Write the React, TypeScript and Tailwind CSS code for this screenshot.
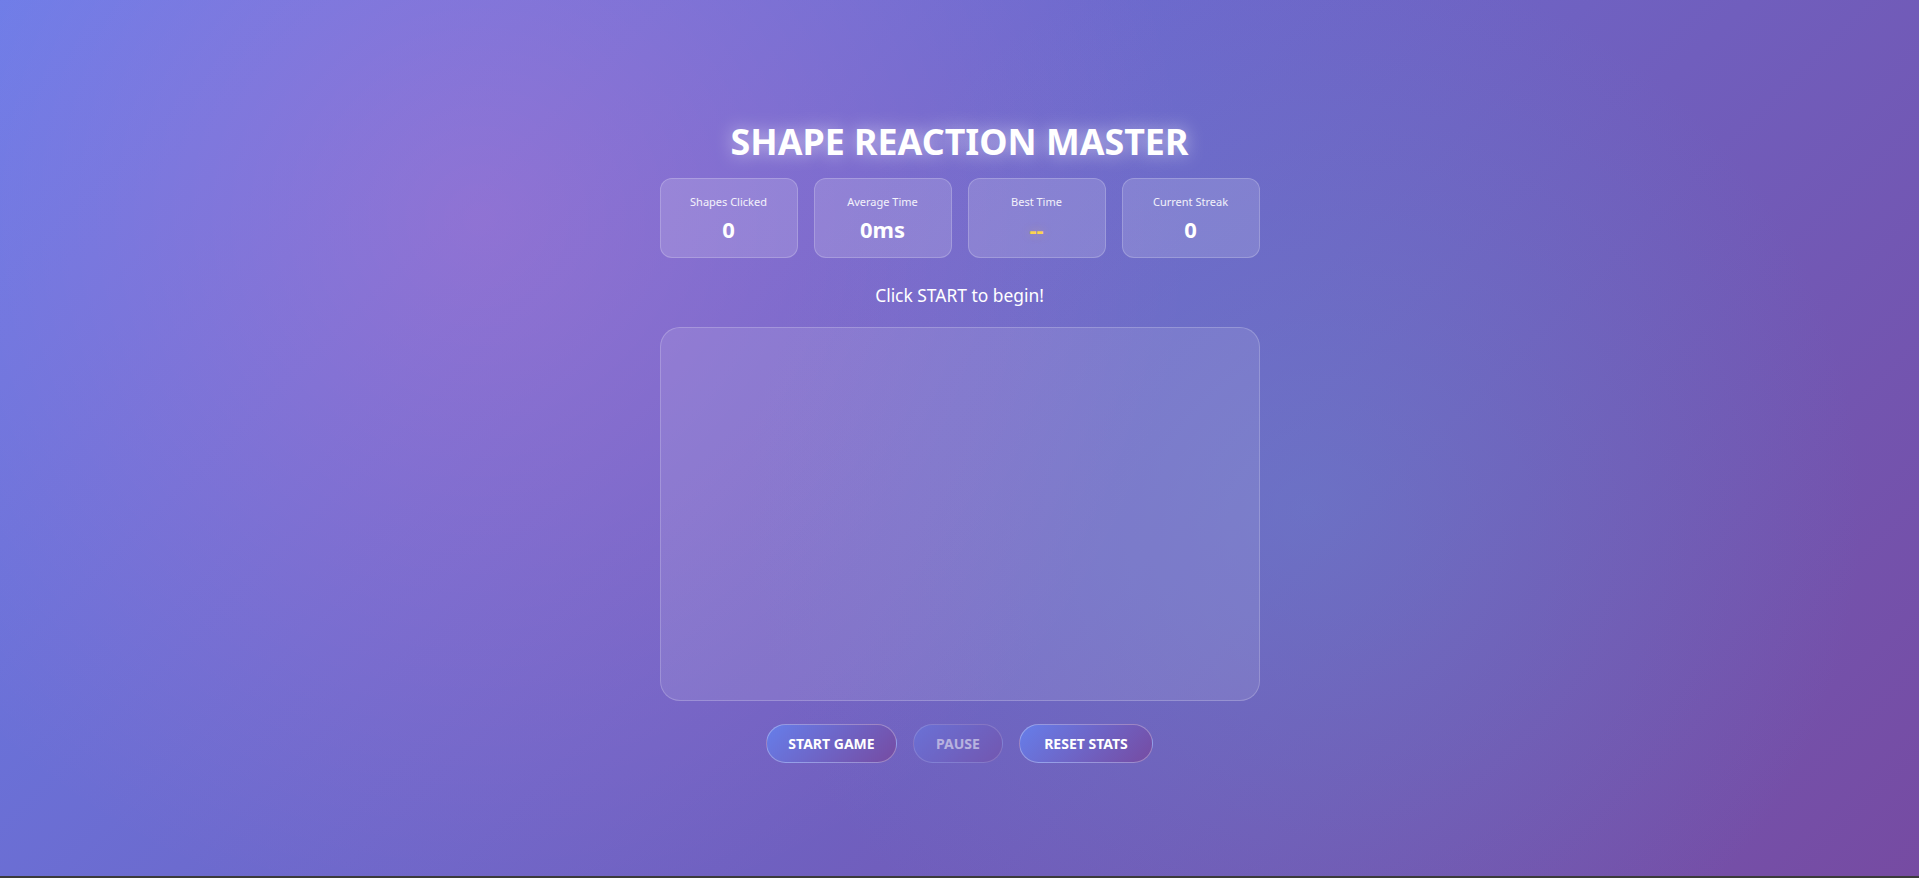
import React, { useState } from "react";

const stats = [
  { label: "Shapes Clicked", value: "0" },
  { label: "Average Time", value: "0ms" },
  { label: "Best Time", value: "--", best: true },
  { label: "Current Streak", value: "0" },
];

export default function App() {
  const [running, setRunning] = useState(false);
  return (
    <div className="font-['Noto_Sans',sans-serif] text-white">
      <div className="h-[876px] flex flex-col items-center pt-[120px] bg-[radial-gradient(circle_at_25%_25%,rgba(255,119,198,0.25),transparent_45%),radial-gradient(circle_at_68%_58%,rgba(100,150,215,0.35),transparent_40%),linear-gradient(135deg,#667eea_0%,#764ba2_100%)]">
        <h1 className="text-[35.8px] leading-[42px] font-bold [text-shadow:0_0_18px_rgba(255,255,255,0.6)]">
          SHAPE REACTION MASTER
        </h1>
        <div className="mt-[16px] grid grid-cols-4 gap-4 w-[600px]">
          {stats.map((s) => (
            <div
              key={s.label}
              className="h-[80px] rounded-xl border border-white/20 bg-white/15 flex flex-col items-center pt-[16px]"
            >
              <span className="text-[11px] leading-[14px] text-white/90">{s.label}</span>
              <span
                className={
                  s.best
                    ? "mt-[6px] text-[22px] leading-[29px] font-bold text-[#fcd34d] [text-shadow:0_0_10px_rgba(252,211,77,0.4)]"
                    : "mt-[6px] text-[22px] leading-[29px] font-bold text-white"
                }
              >
                {s.value}
              </span>
            </div>
          ))}
        </div>
        <p className="mt-[24px] text-[17.4px] leading-[27px]">Click START to begin!</p>
        <div className="mt-[18px] w-[600px] h-[374px] rounded-[20px] border border-white/20 bg-white/10" />
        <div className="mt-[23px] flex gap-4">
          <button
            onClick={() => setRunning(true)}
            className="w-[131px] h-[39px] rounded-full border border-white/30 bg-[linear-gradient(135deg,#667eea_0%,#764ba2_100%)] text-[14px] font-bold"
          >
            START GAME
          </button>
          <button
            disabled={!running}
            className="w-[90px] h-[39px] rounded-full border border-white/30 bg-[linear-gradient(135deg,#667eea_0%,#764ba2_100%)] text-[14px] font-bold opacity-50"
          >
            PAUSE
          </button>
          <button className="w-[134px] h-[39px] rounded-full border border-white/30 bg-[linear-gradient(135deg,#667eea_0%,#764ba2_100%)] text-[14px] font-bold">
            RESET STATS
          </button>
        </div>
      </div>
      <div className="h-[2px] bg-[#3b3b3b]" />
    </div>
  );
}
